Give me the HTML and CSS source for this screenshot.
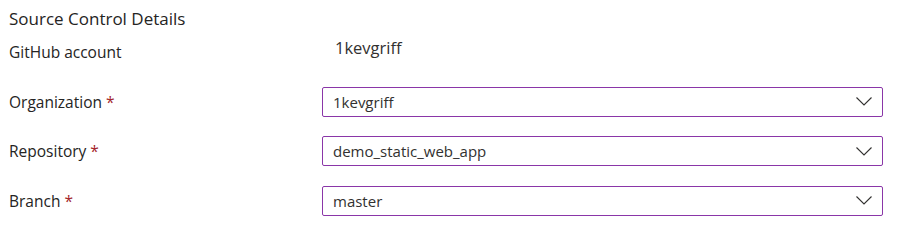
FILE: index.html
```html
<!DOCTYPE html>
<html lang="en">
<head>
    <meta charset="UTF-8">
    <title>Source Control Details</title>
    <link rel="stylesheet" href="styles.css">
</head>
<body>
    <div class="section">
        <h3 class="section-title">Source Control Details</h3>

        <div class="form-row account-row">
            <label class="field-label">GitHub account</label>
            <div class="static-value">1kevgriff</div>
        </div>

        <div class="form-row">
            <label class="field-label">Organization <span class="req">*</span></label>
            <div class="dropdown">
                <span class="dropdown-text">1kevgriff</span>
                <svg class="chevron" width="16" height="9" viewBox="0 0 16 9"><path d="M0.5 0.5 L8 8 L15.5 0.5" fill="none" stroke="#323130" stroke-width="1.1"/></svg>
            </div>
        </div>

        <div class="form-row">
            <label class="field-label">Repository <span class="req">*</span></label>
            <div class="dropdown">
                <span class="dropdown-text">demo_static_web_app</span>
                <svg class="chevron" width="16" height="9" viewBox="0 0 16 9"><path d="M0.5 0.5 L8 8 L15.5 0.5" fill="none" stroke="#323130" stroke-width="1.1"/></svg>
            </div>
        </div>

        <div class="form-row">
            <label class="field-label">Branch <span class="req">*</span></label>
            <div class="dropdown">
                <span class="dropdown-text">master</span>
                <svg class="chevron" width="16" height="9" viewBox="0 0 16 9"><path d="M0.5 0.5 L8 8 L15.5 0.5" fill="none" stroke="#323130" stroke-width="1.1"/></svg>
            </div>
        </div>
    </div>
</body>
</html>
```

FILE: styles.css
```css
body {
    margin: 0;
    font-family: 'Open Sans', 'Noto Sans', sans-serif;
    color: #323130;
    background: #fff;
}
.section {
    padding: 8px 22px 0 9px;
}
.section-title {
    margin: 0;
    font-size: 17px;
    font-weight: 400;
    line-height: 21px;
    color: #252423;
}
.form-row {
    display: grid;
    grid-template-columns: 313px 1fr;
    align-items: center;
    height: 30px;
    margin-top: 19.5px;
}
.account-row {
    margin-top: 8px;
}
.field-label {
    font-size: 15.5px;
    color: #252423;
}
.req {
    color: #a4262c;
}
.static-value {
    font-size: 16.5px;
    padding-left: 13px;
    margin-top: -9px;
}
.dropdown {
    display: flex;
    align-items: center;
    justify-content: space-between;
    height: 30px;
    box-sizing: border-box;
    border: 1px solid #8a36a8;
    border-radius: 2px;
    padding: 0 10px 0 10px;
    font-size: 15px;
}
.chevron {
    display: block;
}
```
